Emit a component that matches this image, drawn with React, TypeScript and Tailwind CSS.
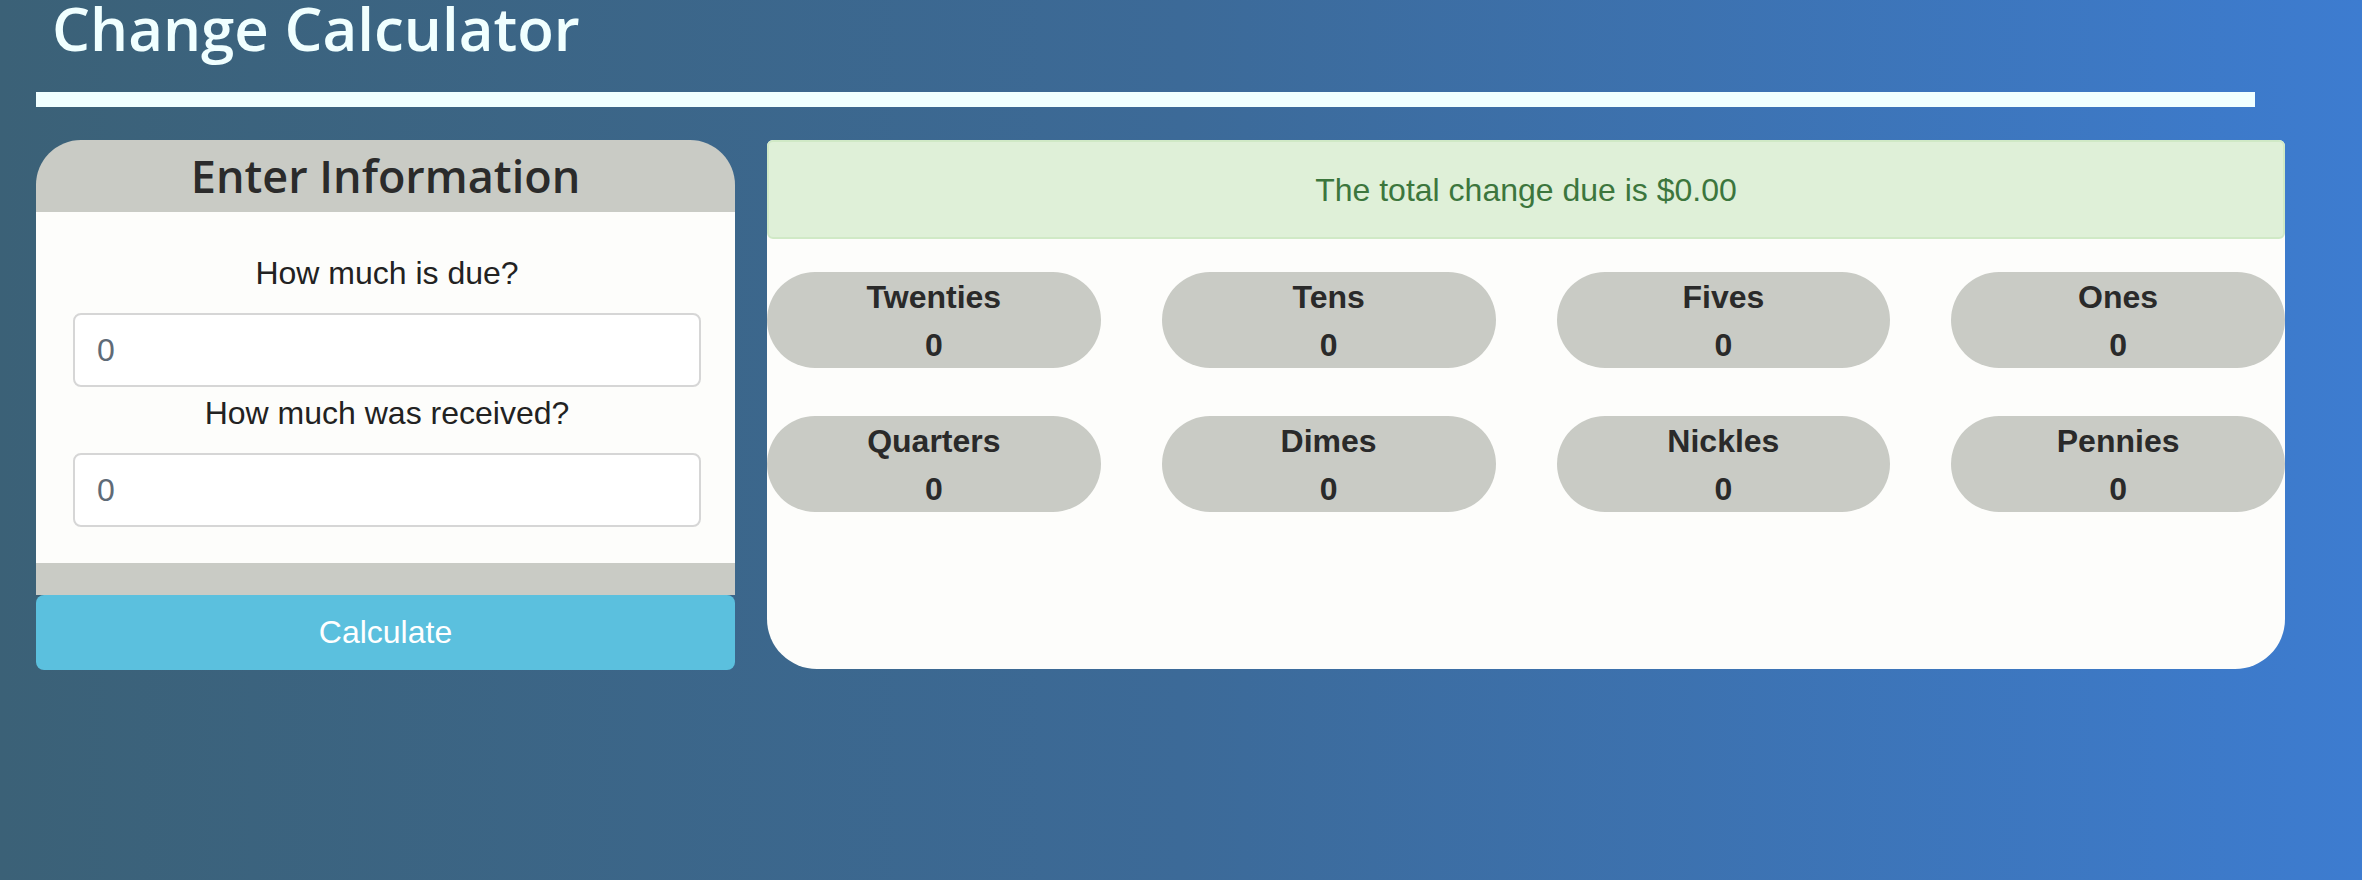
import { useState } from "react";

const denominations = [
    "Twenties",
    "Tens",
    "Fives",
    "Ones",
    "Quarters",
    "Dimes",
    "Nickles",
    "Pennies",
];

export default function App() {
    const [due, setDue] = useState("");
    const [received, setReceived] = useState("");

    return (
        <div
            className="min-h-[880px] w-full overflow-hidden bg-gradient-to-r from-[#3b6177] via-[#3c6a98] to-[#3d7cd0] px-[36px] font-['Liberation_Sans',Arial,sans-serif]"
        >
            {/* Title */}
            <h1 className="mt-[-2px] pl-[16px] font-['Open_Sans',sans-serif] text-[60px] font-semibold leading-[60px] text-[#f0ffff]">
                Change Calculator
            </h1>
            <div className="mt-[34px] h-[15px] w-[2219px] bg-[#f0ffff]" />

            <div className="mt-[33px] flex gap-[32px]">
                {/* Left: input panel */}
                <div className="flex w-[699px] shrink-0 flex-col">
                    <div className="flex h-[72px] items-center justify-center rounded-t-[45px] bg-[#c9cbc5]">
                        <h2 className="font-['Open_Sans',sans-serif] text-[45px] font-semibold leading-[46px] text-[#2b2b2b]">
                            Enter Information
                        </h2>
                    </div>

                    <div className="flex flex-col bg-[#fdfdfb] pl-[37px] pr-[34px] pb-[36px] pt-[43px] text-center text-[32px] text-[#222]">
                        <label className="mb-[22px] leading-[36px]">How much is due?</label>
                        <input
                            type="text"
                            placeholder="0"
                            value={due}
                            onChange={(e) => setDue(e.target.value)}
                            className="mb-[8px] h-[74px] rounded-[8px] border-2 border-[#d6d6d6] bg-white px-[22px] text-left text-[32px] text-[#333] placeholder:text-[#5f6b77] outline-none"
                        />
                        <label className="mb-[22px] leading-[36px]">How much was received?</label>
                        <input
                            type="text"
                            placeholder="0"
                            value={received}
                            onChange={(e) => setReceived(e.target.value)}
                            className="h-[74px] rounded-[8px] border-2 border-[#d6d6d6] bg-white px-[22px] text-left text-[32px] text-[#333] placeholder:text-[#5f6b77] outline-none"
                        />
                    </div>

                    <div className="h-[32px] bg-[#c9cbc5]" />

                    <button
                        type="button"
                        className="flex h-[75px] items-center justify-center rounded-[8px] bg-[#5bc0de] pb-[2px] text-[32px] text-white"
                    >
                        Calculate
                    </button>
                </div>

                {/* Right: results panel */}
                <div className="flex h-[529px] w-[1518px] shrink-0 flex-col rounded-t-[6px] rounded-b-[50px] bg-[#fdfdfb]">
                    <div className="flex h-[99px] items-center justify-center rounded-[6px] border-2 border-[#d0e9c6] bg-[#dff0d8] text-[32px] text-[#3c763d]">
                        The total change due is $0.00
                    </div>

                    <div className="mt-[33px] grid grid-cols-4 gap-x-[61px] gap-y-[48px]">
                        {denominations.map((name) => (
                            <div
                                key={name}
                                className="flex h-[96px] flex-col items-center rounded-full bg-[#c9cbc5] pt-[1px] text-[32px] font-bold leading-[48px] text-[#2a2a2a]"
                            >
                                <span>{name}</span>
                                <span>0</span>
                            </div>
                        ))}
                    </div>
                </div>
            </div>
        </div>
    );
}
